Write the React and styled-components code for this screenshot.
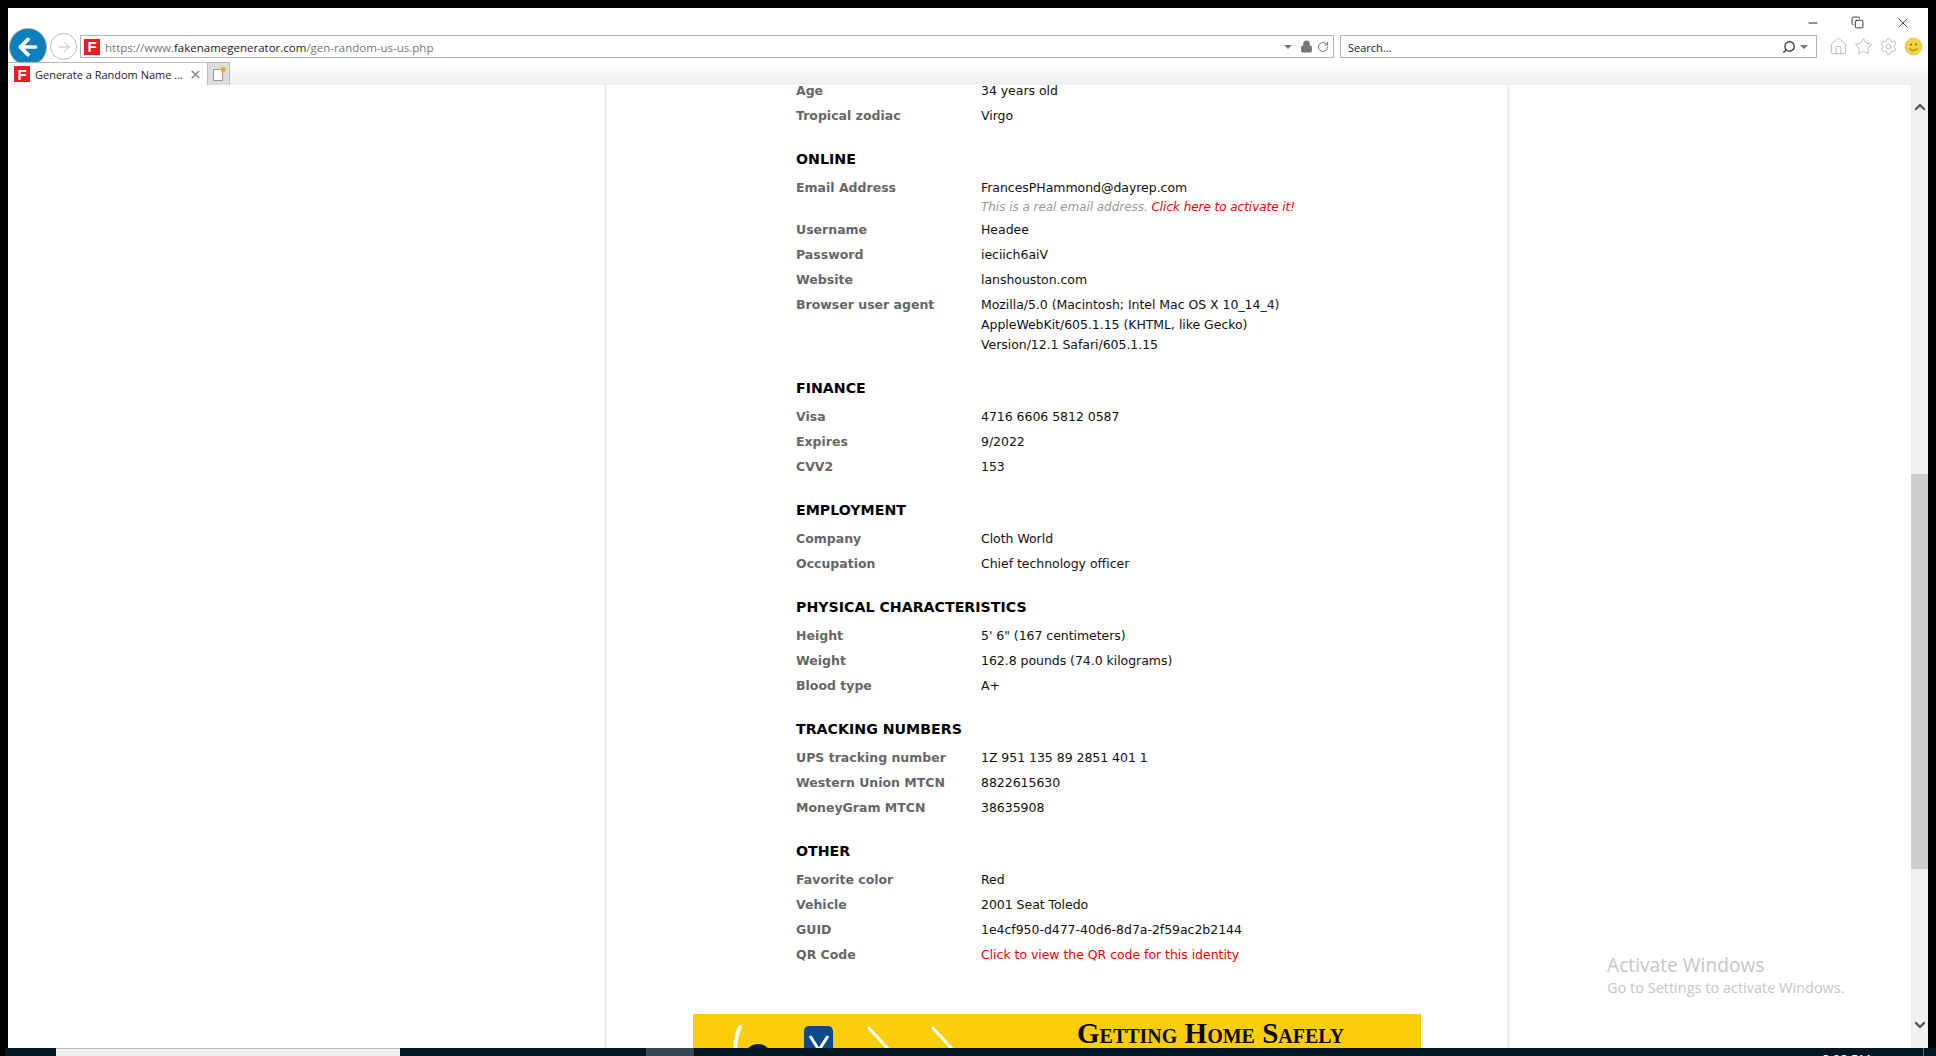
import React from "react";
import styled, { createGlobalStyle } from "styled-components";
import { Home, Star, Settings, ArrowLeft, ArrowRight, RotateCw, Search, X, Minus, Copy, ChevronUp, ChevronDown, Lock } from "lucide-react";

const Global = createGlobalStyle`
  html, body { margin: 0; padding: 0; height: 100%; background: #000; overflow: hidden; }
  #root { height: 100%; }
`;

const Screen = styled.div`
  height: 1056px; width: 1936px; display: flex; flex-direction: column;
  padding: 8px 8px 0 8px; box-sizing: border-box; position: relative; overflow: hidden;
  font-family: "DejaVu Sans", sans-serif;
`;
const Chrome = styled.header`
  height: 77px; flex: none; background: #fff; display: flex; flex-direction: column; position: relative; z-index: 2;
`;
const ControlRow = styled.div`
  height: 27px; display: flex; justify-content: flex-end; align-items: center; padding-right: 3px; padding-top: 2px; box-sizing: border-box;
`;
const ControlButton = styled.span`
  width: 45px; display: flex; justify-content: center; align-items: center; color: #111;
`;
const AddressRow = styled.div`
  height: 23px; display: flex; align-items: center; padding-left: 2px; gap: 4px;
`;
const BackButton = styled.span`
  width: 36px; height: 36px; border-radius: 50%; background: #0b7fc0; flex: none; color: #fff;
  display: flex; align-items: center; justify-content: center; box-shadow: 0 0 0 1px #aaa;
`;
const ForwardButton = styled.span`
  width: 25px; height: 25px; border-radius: 50%; border: 1px solid #bbb; background: #fff; flex: none; color: #bbb;
  display: flex; align-items: center; justify-content: center;
`;
const Field = styled.div`
  height: 23px; box-sizing: border-box; border: 1px solid #b4b4b4; background: #fff; display: flex; align-items: center; color: #666;
  font-family: "Open Sans", sans-serif; ${p => p.$grow ? "flex: 1; min-width: 0; margin-left: -1px;" : "width: 477px; flex: none; margin-left: 2px; padding-left: 7px;"}
`;
const Favicon = styled.span`
  width: 16px; height: 16px; background: #ec1c24; color: #fff; flex: none; display: flex; align-items: center; justify-content: center;
  font: 900 15px "Liberation Sans", sans-serif; margin: 0 5px 0 3px;
`;
const Url = styled.span`flex: 1; color: #777; font-size: 11.5px; padding-top: 1px; white-space: nowrap;`;
const Dark = styled.span`color: #222;`;
const FieldIcons = styled.span`display: flex; align-items: center; gap: 4px; padding-right: 4px; color: #777;`;
const Caret = styled.span`
  width: 0; height: 0; border-left: 4px solid transparent; border-right: 4px solid transparent; border-top: 4px solid #777; margin-right: 4px;
`;
const SearchText = styled.span`flex: 1; color: #222; font-size: 11px; padding-top: 1px;`;
const Tools = styled.div`
  flex: none; width: 104px; margin-left: 3px; display: flex; align-items: center; gap: 6px; padding-left: 5px; box-sizing: border-box; color: #aaa;
`;
const TabRow = styled.div`
  height: 23px; margin-top: 4px; display: flex; background: linear-gradient(#fff, #eee);
`;
const Tab = styled.div`
  width: 200px; box-sizing: border-box; background: #fff; border-top: 1px solid #bbb; border-right: 1px solid #bbb; display: flex; align-items: center;
  padding-left: 3px; font-family: "Open Sans", sans-serif; font-size: 11px; color: #222;
`;
const TabTitle = styled.span`flex: 1; white-space: nowrap;`;
const TabClose = styled.span`display: flex; margin-right: 5px; color: #888;`;
const NewTab = styled.div`
  width: 22px; box-sizing: border-box; background: #ddd; border-top: 1px solid #bbb; border-right: 1px solid #bbb; display: flex; align-items: center; justify-content: center;
`;
const Body = styled.div`
  flex: 1; display: flex; min-height: 0; background: #fff; overflow: hidden;
`;
const Page = styled.main`
  flex: 1; min-width: 0; overflow: hidden; display: flex; padding-left: 596px;
`;
const Column = styled.div`
  width: 906px; flex: none; box-sizing: border-box; border-left: 3px solid #f0f0f0; border-right: 3px solid #f0f0f0; padding-left: 189px;
`;
const Scrolled = styled.div`margin-top: -7px;`;
const Section = styled.section``;
const Heading = styled.h3`
  margin: 21px 0 5px; font-size: 14.2px; line-height: 21px; font-weight: 700; color: #000;
`;
const Row = styled.div`
  display: grid; grid-template-columns: 185px 1fr; padding: 2.5px 0; line-height: 20px; font-size: 12.5px; color: #111;
`;
const Label = styled.div`font-weight: 700; color: #666;`;
const ValueText = styled.div`letter-spacing: -.04px;`;
const Note = styled.div`font-size: 12px; line-height: 16px; padding-top: 1px; font-style: italic; color: #999;`;
const RedLink = styled.span`color: #f00;`;
const Banner = styled.div`
  width: 728px; height: 90px; margin: 47px 0 0 -103px; background: #fccd0a; display: flex;
`;
const BannerArt = styled.svg`width: 384px; height: 90px; flex: none;`;
const BannerTitle = styled.div`
  font: 700 29px "Liberation Serif", serif; font-variant: small-caps; color: #0a0a00; padding-top: 2px; white-space: nowrap; line-height: 34px;
`;
const Scrollbar = styled.aside`
  width: 17px; flex: none; background: #f0f0f0; display: flex; flex-direction: column; align-items: center; color: #555;
`;
const ScrollButton = styled.span`
  height: 20px; flex: none; display: flex; align-items: center; justify-content: center;
  margin-top: ${p => p.$top || 0}px; margin-bottom: ${p => p.$bottom || 0}px;
`;
const Thumb = styled.div`
  width: 100%; height: 395px; margin-top: 357px; background: #cdcdcd; flex: none;
`;
const Spacer = styled.div`flex: 1;`;
const Taskbar = styled.footer`
  height: 8px; flex: none; background: #011722; margin: 0 -8px 0 -3px; display: flex; position: relative; z-index: 2;
`;
const TaskGap = styled.span`width: ${p => p.$w}px; flex: none; background: ${p => p.$bg || "transparent"}; ${p => p.$line ? "border-top: 1px solid #bbb; box-sizing: border-box;" : ""}`;
const Clock = styled.span`
  position: absolute; left: 1817px; top: 3px; font: 13px "Open Sans", sans-serif; color: #fff; line-height: 16px;
`;
const TrayLine = styled.span`
  position: absolute; left: 1918px; top: 0; bottom: 0; width: 1px; background: #667;
`;
const Watermark = styled.div`
  position: absolute; left: 1607px; top: 952px; font-family: "Open Sans", sans-serif; color: #c6c6c6; z-index: 1; pointer-events: none;
`;
const WatermarkTitle = styled.div`font-size: 19.2px; line-height: 26px;`;
const WatermarkSub = styled.div`font-size: 14.5px; line-height: 20px;`;

const sections = [
  { rows: [["Age", "34 years old"], ["Tropical zodiac", "Virgo"]] },
  { title: "ONLINE", rows: [
    ["Email Address", "FrancesPHammond@dayrep.com", "note"],
    ["Username", "Headee"], ["Password", "ieciich6aiV"], ["Website", "lanshouston.com"],
    ["Browser user agent", "Mozilla/5.0 (Macintosh; Intel Mac OS X 10_14_4)\nAppleWebKit/605.1.15 (KHTML, like Gecko)\nVersion/12.1 Safari/605.1.15"],
  ]},
  { title: "FINANCE", rows: [["Visa", "4716 6606 5812 0587"], ["Expires", "9/2022"], ["CVV2", "153"]] },
  { title: "EMPLOYMENT", rows: [["Company", "Cloth World"], ["Occupation", "Chief technology officer"]] },
  { title: "PHYSICAL CHARACTERISTICS", rows: [["Height", "5' 6\" (167 centimeters)"], ["Weight", "162.8 pounds (74.0 kilograms)"], ["Blood type", "A+"]] },
  { title: "TRACKING NUMBERS", rows: [["UPS tracking number", "1Z 951 135 89 2851 401 1"], ["Western Union MTCN", "8822615630"], ["MoneyGram MTCN", "38635908"]] },
  { title: "OTHER", rows: [["Favorite color", "Red"], ["Vehicle", "2001 Seat Toledo"], ["GUID", "1e4cf950-d477-40d6-8d7a-2f59ac2b2144"], ["QR Code", "Click to view the QR code for this identity", "link"]] },
];

function Value({ text, kind }) {
  if (kind === "link") return <ValueText><RedLink>{text}</RedLink></ValueText>;
  return (
    <ValueText>
      {text.split("\n").map(l => <div key={l}>{l}</div>)}
      {kind === "note" && <Note>This is a real email address. <RedLink>Click here to activate it!</RedLink></Note>}
    </ValueText>
  );
}

export default function App() {
  return (
    <Screen>
      <Global />
      <Chrome>
        <ControlRow>
          <ControlButton><Minus size={14} strokeWidth={1.6} /></ControlButton>
          <ControlButton><Copy size={13} strokeWidth={1.5} /></ControlButton>
          <ControlButton><X size={16} strokeWidth={1.1} /></ControlButton>
        </ControlRow>
        <AddressRow>
          <BackButton><ArrowLeft size={26} strokeWidth={3.4} /></BackButton>
          <ForwardButton><ArrowRight size={18} strokeWidth={1.3} /></ForwardButton>
          <Field $grow>
            <Favicon>F</Favicon>
            <Url>https://www.<Dark>fakenamegenerator.com</Dark>/gen-random-us-us.php</Url>
            <FieldIcons>
              <Caret />
              <Lock size={13} fill="#777" strokeWidth={2} />
              <RotateCw size={12} strokeWidth={2} />
            </FieldIcons>
          </Field>
          <Field>
            <SearchText>Search...</SearchText>
            <FieldIcons>
              <Search size={14} strokeWidth={2.4} color="#444" style={{ transform: "scaleX(-1)" }} />
              <Caret />
            </FieldIcons>
          </Field>
          <Tools>
            <Home size={19} strokeWidth={1} />
            <Star size={19} strokeWidth={1} />
            <Settings size={19} strokeWidth={1} />
            <svg width="19" height="19" viewBox="0 0 19 19">
              <circle cx="9.5" cy="9.5" r="8.5" fill="#f3d33c" stroke="#d9c98a" />
              <circle cx="7" cy="7.5" r="1" fill="#7a6a10" />
              <circle cx="12" cy="7.5" r="1" fill="#7a6a10" />
              <path d="M5.5 11.5c1 2.4 7 2.4 8 0" fill="none" stroke="#7a6a10" />
            </svg>
          </Tools>
        </AddressRow>
        <TabRow>
          <Tab>
            <Favicon>F</Favicon>
            <TabTitle>Generate a Random Name ...</TabTitle>
            <TabClose><X size={13} strokeWidth={3} /></TabClose>
          </Tab>
          <NewTab>
            <svg width="16" height="16" viewBox="0 0 16 16">
              <path d="M2.5 3.5h9v11h-9z" fill="#fff" stroke="#999" />
              <path d="M12 0.5v6M9 3.5h6M10 1.5l4 4M14 1.5l-4 4" stroke="#f5a623" strokeWidth="1.1" />
            </svg>
          </NewTab>
        </TabRow>
      </Chrome>
      <Body>
        <Page>
          <Column>
            <Scrolled>
              {sections.map(s => (
                <Section key={s.title || "top"}>
                  {s.title && <Heading>{s.title}</Heading>}
                  {s.rows.map(([l, v, k]) => (
                    <Row key={l}><Label>{l}</Label><Value text={v} kind={k} /></Row>
                  ))}
                </Section>
              ))}
              <Banner>
                <BannerArt viewBox="0 0 384 90">
                  <path d="M47 13c-3 7-5 14-5 24" stroke="#fff" strokeWidth="4" fill="none" strokeLinecap="round" />
                  <circle cx="65" cy="44" r="14" fill="#0b1b4a" />
                  <rect x="111" y="12" width="29" height="40" rx="5" fill="#0c4a8e" />
                  <path d="M117 22l9 14 9-14" stroke="#fff" strokeWidth="3" fill="none" />
                  <path d="M175 13l23 25M239 13l23 25" stroke="#fff" strokeWidth="3" />
                </BannerArt>
                <BannerTitle>Getting Home Safely</BannerTitle>
              </Banner>
            </Scrolled>
          </Column>
        </Page>
        <Scrollbar>
          <ScrollButton $top={12}><ChevronUp size={16} strokeWidth={3.5} /></ScrollButton>
          <Thumb />
          <Spacer />
          <ScrollButton $bottom={13}><ChevronDown size={16} strokeWidth={3.5} /></ScrollButton>
        </Scrollbar>
      </Body>
      <Taskbar>
        <TaskGap $w={51} />
        <TaskGap $w={344} $bg="#f0f0f0" $line />
        <TaskGap $w={246} />
        <TaskGap $w={48} $bg="#37474f" />
        <Clock>8:08 PM</Clock>
        <TrayLine />
      </Taskbar>
      <Watermark>
        <WatermarkTitle>Activate Windows</WatermarkTitle>
        <WatermarkSub>Go to Settings to activate Windows.</WatermarkSub>
      </Watermark>
    </Screen>
  );
}
